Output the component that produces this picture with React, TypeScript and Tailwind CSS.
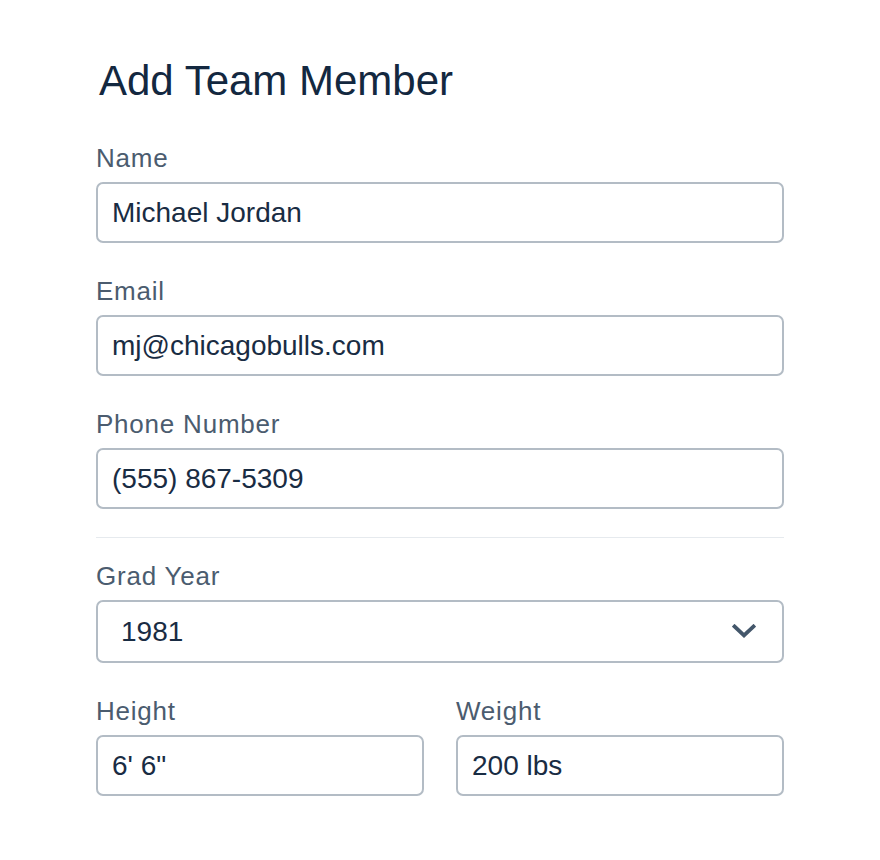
import type { ReactNode } from "react";

function Label({ children }: { children: ReactNode }) {
  return (
    <label className="mb-[11px] block text-[26px] leading-[26px] tracking-[0.03em] text-[#4b5c6f]">
      {children}
    </label>
  );
}

function TextInput({ value }: { value: string }) {
  return (
    <input
      readOnly
      value={value}
      className="block h-[61px] w-full rounded-[7px] border-2 border-[#b3bcc5] bg-white px-[14px] text-[28px] leading-[28px] text-[#192c43] outline-none"
    />
  );
}

function Field({ label, value }: { label: string; value: string }) {
  return (
    <div>
      <Label>{label}</Label>
      <TextInput value={value} />
    </div>
  );
}

function ChevronDown() {
  return (
    <svg width="24" height="15" viewBox="0 0 24 15" fill="none" aria-hidden="true">
      <path d="M2.5 2.5 L12 11.5 L21.5 2.5" stroke="#44576b" strokeWidth="3.8" strokeLinecap="square" strokeLinejoin="miter" />
    </svg>
  );
}

export default function App() {
  return (
    <main
      className="min-h-screen bg-white pl-[96px] pt-[60px]"
      style={{ fontFamily: '"Liberation Sans", Arial, sans-serif' }}
    >
      <div className="w-[688px]">
        <h1 className="pl-[3px] text-[42px] leading-[42px] font-normal text-[#132840]">Add Team Member</h1>

        <div className="mt-[43px] flex flex-col gap-[35px]">
          <Field label="Name" value="Michael Jordan" />
          <Field label="Email" value="mj@chicagobulls.com" />
          <Field label="Phone Number" value="(555) 867-5309" />
        </div>

        <hr className="mb-[25px] mt-[28px] border-0 border-t border-[#e6eaee]" />

        <div>
          <Label>Grad Year</Label>
          <div className="flex h-[63px] w-full items-center justify-between rounded-[7px] border-2 border-[#b3bcc5] bg-white pl-[23px] pr-[26px]">
            <span className="text-[28px] leading-[28px] text-[#192c43]">1981</span>
            <ChevronDown />
          </div>
        </div>

        <div className="mt-[35px] grid grid-cols-2 gap-[32px]">
          <Field label="Height" value={`6' 6"`} />
          <Field label="Weight" value="200 lbs" />
        </div>
      </div>
    </main>
  );
}
